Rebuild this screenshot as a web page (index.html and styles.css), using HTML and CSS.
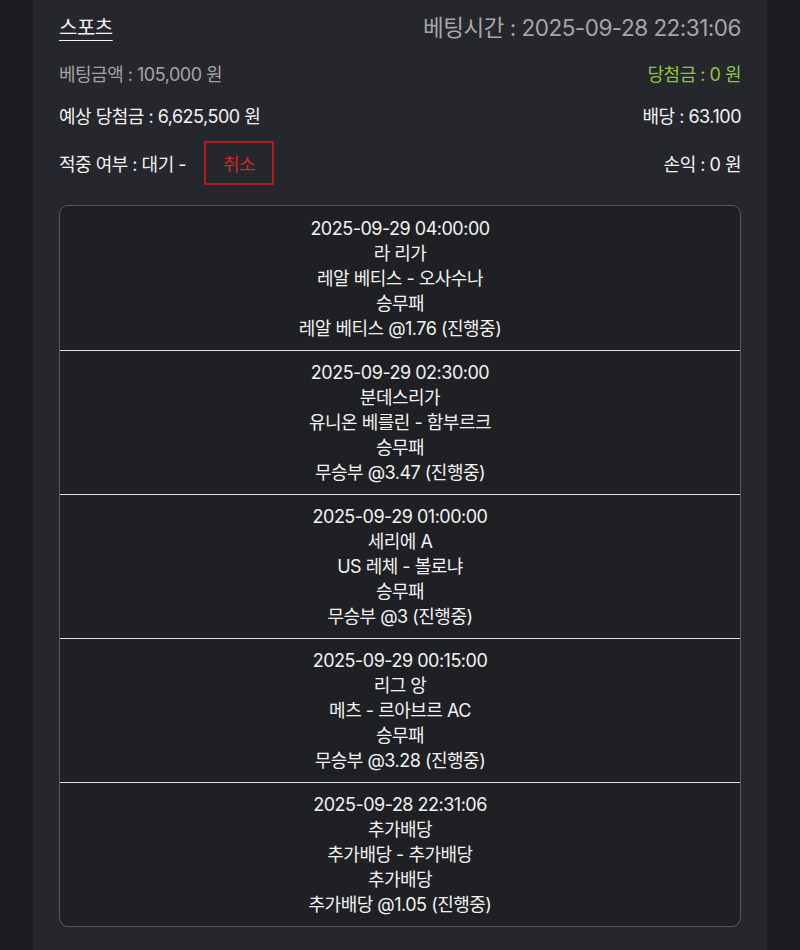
FILE: index.html
```html
<!DOCTYPE html>
<html lang="ko">
<head>
<meta charset="utf-8">
<link rel="stylesheet" href="styles.css">
</head>
<body>
<div class="page">
  <div class="panel">
    <div class="row head">
      <span class="cat">스포츠</span>
      <span class="time">베팅시간 : 2025-09-28 22:31:06</span>
    </div>
    <div class="row r2">
      <span class="muted">베팅금액 : 105,000 원</span>
      <span class="win">당첨금 : 0 원</span>
    </div>
    <div class="row r3">
      <span>예상 당첨금 : 6,625,500 원</span>
      <span>배당 : 63.100</span>
    </div>
    <div class="row r4">
      <span class="status">적중 여부 : 대기 - <button class="cancel">취소</button></span>
      <span>손익 : 0 원</span>
    </div>
    <div class="games">
      <div class="game">
        <div>2025-09-29 04:00:00</div>
        <div>라 리가</div>
        <div>레알 베티스 - 오사수나</div>
        <div>승무패</div>
        <div>레알 베티스 @1.76 (진행중)</div>
      </div>
      <div class="game">
        <div>2025-09-29 02:30:00</div>
        <div>분데스리가</div>
        <div>유니온 베를린 - 함부르크</div>
        <div>승무패</div>
        <div>무승부 @3.47 (진행중)</div>
      </div>
      <div class="game">
        <div>2025-09-29 01:00:00</div>
        <div>세리에 A</div>
        <div>US 레체 - 볼로냐</div>
        <div>승무패</div>
        <div>무승부 @3 (진행중)</div>
      </div>
      <div class="game">
        <div>2025-09-29 00:15:00</div>
        <div>리그 앙</div>
        <div>메츠 - 르아브르 AC</div>
        <div>승무패</div>
        <div>무승부 @3.28 (진행중)</div>
      </div>
      <div class="game">
        <div>2025-09-28 22:31:06</div>
        <div>추가배당</div>
        <div>추가배당 - 추가배당</div>
        <div>추가배당</div>
        <div>추가배당 @1.05 (진행중)</div>
      </div>
    </div>
  </div>
</div>
</body>
</html>
```
FILE: styles.css
```css
* { box-sizing: border-box; }
html, body {
  margin: 0;
  padding: 0;
  background: #1b1c1f;
  height: 100%;
}
body {
  font-family: Inter, "Noto Sans CJK KR", sans-serif;
  color: #f2f2f2;
  letter-spacing: -0.5px;
}
.page {
  padding: 0 33px;
  height: 100%;
}
.panel {
  background: #26272c;
  min-height: 100%;
  padding: 0 26px 24px;
}
.row {
  display: flex;
  justify-content: space-between;
  align-items: center;
  font-size: 18px;
}
.head {
  height: 54px;
  padding-bottom: 2px;
}
.cat {
  font-size: 20px;
  text-decoration: underline;
  text-underline-offset: 5px;
  text-decoration-thickness: 1px;
}
.time {
  font-size: 22.5px;
  color: #a6a6a8;
}
.r2 { height: 38px; }
.muted { color: #a3a3a5; }
.win { color: #8fc33f; }
.r3 { height: 46px; }
.r4 { height: 58px; padding-bottom: 8px; }
.status { display: flex; align-items: center; }
.cancel {
  margin-left: 18px;
  width: 70px;
  height: 44px;
  background: transparent;
  border: 2px solid #b11d1d;
  color: #d0282a;
  font-family: Inter, "Noto Sans CJK KR", sans-serif;
  font-size: 18px;
  letter-spacing: -0.5px;
  padding: 0;
}
.games {
  margin-top: 9px;
  border: 1px solid #56575c;
  border-radius: 9px;
  background: #1f2024;
  overflow: hidden;
}
.game {
  text-align: center;
  font-size: 18px;
  line-height: 25px;
  padding: 9px 0;
  border-top: 1px solid #e2e2e2;
}
.game:first-child { border-top: none; padding-top: 10px; }
```
